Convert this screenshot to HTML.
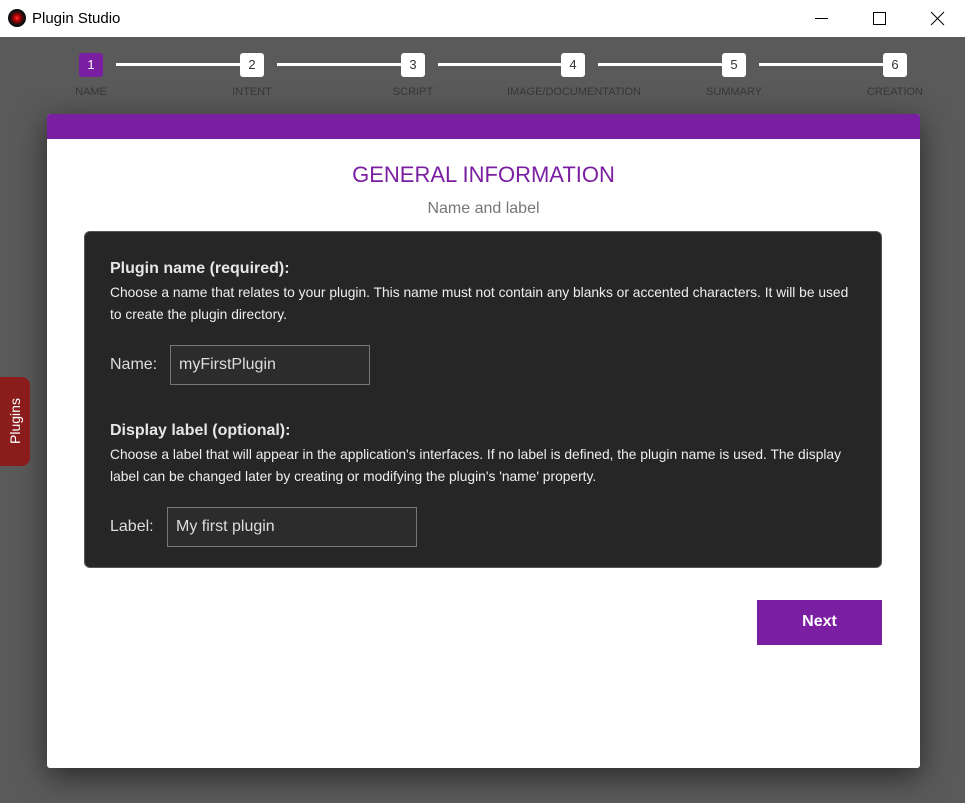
<!DOCTYPE html>
<html><head><style>
*{margin:0;padding:0;box-sizing:border-box}
body{width:965px;height:803px;background:#5a5a5a;font-family:"Liberation Sans",Arial,sans-serif;position:relative;overflow:hidden}
.tb{position:absolute;left:0;top:0;width:965px;height:37px;background:#fff}
.tb .t{position:absolute;left:32px;top:10px;font-size:15px;color:#000}
.ic{position:absolute;left:8px;top:9px;width:18px;height:18px;border-radius:50%;background:radial-gradient(circle,#f33 0,#a00 25%,#111 55%,#000 100%)}
.step{position:absolute;top:53px;width:24px;height:24px;border-radius:3px;background:#fff;color:#333;font-size:13px;text-align:center;line-height:24px}
.step.a{background:#7b1fa2;color:#fff}
.line{position:absolute;top:63px;height:3px;background:#fff}
.lbl{position:absolute;top:86px;font-size:11px;color:#383838;text-align:center;width:160px}
.card{position:absolute;left:47px;top:114px;width:873px;height:654px;background:#fff;border-radius:3px;box-shadow:0 8px 30px rgba(0,0,0,.55);overflow:hidden}
.card .hd{height:25px;background:#7b1fa2}
h1{position:absolute;top:48px;width:100%;text-align:center;font-weight:normal;font-size:22px;color:#7b1fa2}
.sub{position:absolute;top:86px;width:100%;text-align:center;font-size:16px;color:#777}
.pn{position:absolute;left:37px;top:117px;width:798px;height:337px;background:#262626;border:1px solid #555;border-radius:6px;color:#e8e8e8}
.pn h3{position:absolute;left:25px;font-size:16px;font-weight:bold;color:#e6e6e6}
.pn p{position:absolute;left:25px;width:748px;font-size:13.8px;line-height:22px;color:#eee}
.pn .l{position:absolute;left:25px;font-size:16px;color:#ddd}
.pn .in{position:absolute;height:40px;border:1px solid #777;background:#2c2c2c;color:#ddd;font-size:16px;padding-left:8px;line-height:38px}
.btn{position:absolute;left:710px;top:486px;width:125px;height:45px;background:#7b1fa2;color:#fff;font-weight:bold;font-size:16px;text-align:center;line-height:43px}
.tab{position:absolute;left:0;top:377px;width:30px;height:89px;background:#8b1c1c;border-radius:0 8px 8px 0}
.tab span{position:absolute;left:-15px;top:36px;transform:rotate(-90deg);color:#fff;font-size:14px;width:60px;text-align:center}
</style></head><body>
<div class="tb"><div class="ic"></div><div class="t">Plugin Studio</div>
<svg style="position:absolute;left:810px;top:10px" width="140" height="18"><line x1="5" y1="8.5" x2="18" y2="8.5" stroke="#000"/><rect x="63.5" y="2.5" width="12" height="12" fill="none" stroke="#000"/><path d="M121 2L134 15M134 2L121 15" stroke="#000"/></svg></div>
<div class="line" style="left:116px;width:124px"></div>
<div class="line" style="left:277px;width:124px"></div>
<div class="line" style="left:438px;width:124px"></div>
<div class="line" style="left:598px;width:124px"></div>
<div class="line" style="left:759px;width:124px"></div>
<div class="step a" style="left:79px">1</div>
<div class="step" style="left:240px">2</div>
<div class="step" style="left:401px">3</div>
<div class="step" style="left:561px">4</div>
<div class="step" style="left:722px">5</div>
<div class="step" style="left:883px">6</div>
<div class="lbl" style="left:11px">NAME</div>
<div class="lbl" style="left:172px">INTENT</div>
<div class="lbl" style="left:333px">SCRIPT</div>
<div class="lbl" style="left:494px">IMAGE/DOCUMENTATION</div>
<div class="lbl" style="left:654px">SUMMARY</div>
<div class="lbl" style="left:815px">CREATION</div>
<div class="card"><div class="hd"></div>
<h1>GENERAL INFORMATION</h1>
<div class="sub">Name and label</div>
<div class="pn">
<h3 style="top:28px">Plugin name (required):</h3>
<p style="top:50px">Choose a name that relates to your plugin. This name must not contain any blanks or accented characters. It will be used to create the plugin directory.</p>
<div class="l" style="top:124px">Name:</div>
<div class="in" style="left:85px;top:113px;width:200px">myFirstPlugin</div>
<h3 style="top:190px">Display label (optional):</h3>
<p style="top:212px">Choose a label that will appear in the application's interfaces. If no label is defined, the plugin name is used. The display label can be changed later by creating or modifying the plugin's 'name' property.</p>
<div class="l" style="top:286px">Label:</div>
<div class="in" style="left:82px;top:275px;width:250px">My first plugin</div>
</div>
<div class="btn">Next</div>
</div>
<div class="tab"><span>Plugins</span></div>
</body></html>
